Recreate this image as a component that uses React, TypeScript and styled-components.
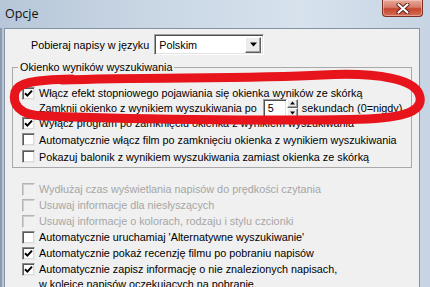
import React from 'react'
import styled, { createGlobalStyle } from 'styled-components'

const GlobalStyle = createGlobalStyle`
  html, body {
    margin: 0;
    padding: 0;
  }
  body {
    width: 430px;
    height: 287px;
    overflow: hidden;
    background: #c9d7e6;
  }
`

export const Window = styled.div`
  position: relative;
  width: 430px;
  height: 287px;
  overflow: hidden;
  display: flex;
  flex-direction: column;
  background: linear-gradient(to right, #b7c7d9 0%, #c9d6e4 35%, #d7e2ed 70%, #c6d4e3 100%);
  font-family: 'Liberation Sans', Arial, sans-serif;
  font-size: 10.8px;
  color: #000;
`

export const TitleBar = styled.div`
  height: 28px;
  flex: none;
  display: flex;
  align-items: flex-start;
  justify-content: space-between;
`

export const Title = styled.span`
  font-family: 'Open Sans', 'Noto Sans', sans-serif;
  font-size: 12.5px;
  line-height: 18px;
  margin: 5px 0 0 5px;
  color: #111;
`

export const CloseButton = styled.div`
  width: 41px;
  height: 17px;
  margin-right: 7px;
  box-sizing: border-box;
  border: 1px solid #7a2e24;
  border-top: none;
  border-radius: 0 0 4px 4px;
  background: linear-gradient(#e7a99b 0%, #d77b68 45%, #c4452f 55%, #d56d52 100%);
  box-shadow: inset 0 0 0 1px rgba(255, 220, 210, 0.45);
  display: flex;
  align-items: center;
  justify-content: center;
`

export const Frame = styled.div`
  flex: 1;
  min-height: 0;
  display: flex;
  padding: 0 10px 0 4px;
  box-shadow: inset 2px 0 0 #8c9aab;
`

export const Client = styled.div`
  flex: 1;
  background: #f0f0f0;
  border: 1px solid #8593a5;
  border-bottom: none;
  display: flex;
  flex-direction: column;
  padding: 5px 0 0 0;
`

export const LangRow = styled.div`
  display: flex;
  align-items: center;
  gap: 5px;
  padding-left: 26px;
  height: 21px;
`

/* classic 3D sunken edit/combo frame */
export const Sunken = styled.div<{ $w: number; $h: number }>`
  width: ${(p) => p.$w}px;
  height: ${(p) => p.$h}px;
  box-sizing: border-box;
  background: #fff;
  border: 1px solid;
  border-color: #a0a0a0 #ffffff #ffffff #a0a0a0;
  box-shadow: inset 1px 1px 0 #505050, inset -1px -1px 0 #e3e3e3;
  display: flex;
  align-items: center;
  padding: 0 2px 0 4px;
`

export const FieldText = styled.span`
  flex: 1;
  line-height: 14px;
`

export const Raised = styled.div<{ $w: number; $h: number }>`
  width: ${(p) => p.$w}px;
  height: ${(p) => p.$h}px;
  box-sizing: border-box;
  background: #ececec;
  border: 1px solid;
  border-color: #ffffff #606060 #606060 #ffffff;
  box-shadow: inset -1px -1px 0 #a0a0a0;
  display: flex;
  align-items: center;
  justify-content: center;
`

export const Group = styled.fieldset`
  margin: 6px 7px 0 7px;
  padding: 11px 0 2px 9px;
  border: 1px solid #a9a9a9;
  min-width: 0;
`

export const Legend = styled.legend`
  padding: 0 2px;
  margin-left: -4px;
  line-height: 13px;
`

export const Rows = styled.div`
  display: flex;
  flex-direction: column;
`

export const Row = styled.div<{ $h: number }>`
  flex: none;
  display: flex;
  align-items: center;
  height: ${(p) => p.$h}px;
  white-space: nowrap;
`

export const Label = styled.span<{ $disabled?: boolean }>`
  margin-left: 4px;
  line-height: 14px;
  color: ${(p) => (p.$disabled ? '#a6a6a6' : '#000')};
`

export const PlainLabel = styled.span`
  margin-left: 17px;
  line-height: 14px;
`

export const Box = styled.span<{ $disabled?: boolean }>`
  flex: none;
  width: 13px;
  height: 13px;
  box-sizing: border-box;
  border: 1px solid;
  border-color: ${(p) =>
    p.$disabled ? '#b5b5b5 #f4f4f4 #f4f4f4 #b5b5b5' : '#8a8a8a #e8e8e8 #e8e8e8 #8a8a8a'};
  background: ${(p) => (p.$disabled ? '#f0f0f0' : '#fff')};
  box-shadow: ${(p) =>
    p.$disabled ? 'inset 1px 1px 0 #cfcfcf' : 'inset 1px 1px 0 #5a5a5a, inset -1px -1px 0 #dcdcdc'};
  display: inline-flex;
  align-items: center;
  justify-content: center;
`

export const Lower = styled.div`
  display: flex;
  flex-direction: column;
  padding-left: 17px;
  margin-top: 13px;
`

export const MultiRow = styled.div`
  display: flex;
  align-items: flex-start;
  padding-top: 2px;
`

export const MultiLabel = styled.span`
  margin-left: 4px;
  line-height: 15px;
  margin-top: -1px;
  white-space: nowrap;
`

export const SpinWrap = styled.div`
  display: flex;
  align-items: center;
  margin: 0 4px 0 6px;
`

export const SpinButtons = styled.div`
  display: flex;
  flex-direction: column;
`

export const Overlay = styled.svg`
  position: absolute;
  left: 0;
  top: 0;
  pointer-events: none;
`

const Check = () => (
  <svg width="9" height="9" viewBox="0 0 9 9">
    <path d="M1 4.2 L3.4 6.6 L8 1.6" stroke="#000" strokeWidth="2" fill="none" />
  </svg>
)

interface CheckItemProps {
  checked?: boolean
  disabled?: boolean
  h?: number
  children: React.ReactNode
}

const CheckItem: React.FC<CheckItemProps> = ({ checked, disabled, h = 16, children }) => (
  <Row $h={h}>
    <Box $disabled={disabled}>{checked && <Check />}</Box>
    <Label $disabled={disabled}>{children}</Label>
  </Row>
)

const Arrow = ({ up, size = 7 }: { up?: boolean; size?: number }) => (
  <svg width={size} height={Math.ceil(size / 2) + 1} viewBox="0 0 7 4">
    <path d={up ? 'M0 4 L3.5 0 L7 4 Z' : 'M0 0 L7 0 L3.5 4 Z'} fill="#000" />
  </svg>
)

export default function App() {
  return (
    <Window>
      <GlobalStyle />
      <TitleBar>
        <Title>Opcje</Title>
        <CloseButton>
          <svg width="14" height="11" viewBox="0 0 14 11">
            <path
              d="M2.5 1.5 L11.5 9.5 M11.5 1.5 L2.5 9.5"
              stroke="#5a1a12"
              strokeWidth="4"
              strokeLinecap="round"
            />
            <path
              d="M2.5 1.5 L11.5 9.5 M11.5 1.5 L2.5 9.5"
              stroke="#fff"
              strokeWidth="2.2"
              strokeLinecap="round"
            />
          </svg>
        </CloseButton>
      </TitleBar>
      <Frame>
        <Client>
          <LangRow>
            <span>Pobieraj napisy w języku</span>
            <Sunken $w={110} $h={21}>
              <FieldText>Polskim</FieldText>
              <Raised $w={16} $h={16}>
                <Arrow />
              </Raised>
            </Sunken>
          </LangRow>

          <Group>
            <Legend>Okienko wyników wyszukiwania</Legend>
            <Rows>
              <CheckItem checked h={16}>
                Włącz efekt stopniowego pojawiania się okienka wyników ze skórką
              </CheckItem>
              <Row $h={14}>
                <PlainLabel>Zamknij okienko z wynikiem wyszukiwania po</PlainLabel>
                <SpinWrap>
                  <Sunken $w={24} $h={19}>
                    <FieldText>5</FieldText>
                  </Sunken>
                  <SpinButtons>
                    <Raised $w={11} $h={9.5}>
                      <Arrow up size={5} />
                    </Raised>
                    <Raised $w={11} $h={9.5}>
                      <Arrow size={5} />
                    </Raised>
                  </SpinButtons>
                </SpinWrap>
                <span>sekundach (0=nigdy)</span>
              </Row>
              <CheckItem checked h={16}>
                Wyłącz program po zamknięciu okienka z wynikiem wyszukiwania
              </CheckItem>
              <CheckItem h={17}>
                Automatycznie włącz film po zamknięciu okienka z wynikiem wyszukiwania
              </CheckItem>
              <CheckItem h={17}>
                Pokazuj balonik z wynikiem wyszukiwania zamiast okienka ze skórką
              </CheckItem>
            </Rows>
          </Group>

          <Lower>
            <CheckItem disabled>Wydłużaj czas wyświetlania napisów do prędkości czytania</CheckItem>
            <CheckItem disabled>Usuwaj informacje dla niesłyszących</CheckItem>
            <CheckItem disabled>Usuwaj informacje o kolorach, rodzaju i stylu czcionki</CheckItem>
            <CheckItem>Automatycznie uruchamiaj 'Alternatywne wyszukiwanie'</CheckItem>
            <CheckItem checked>Automatycznie pokaż recenzję filmu po pobraniu napisów</CheckItem>
            <MultiRow>
              <Box>
                <Check />
              </Box>
              <MultiLabel>
                Automatycznie zapisz informację o nie znalezionych napisach,
                <br />w kolejce napisów oczekujących na pobranie.
              </MultiLabel>
            </MultiRow>
          </Lower>
        </Client>
      </Frame>

      <Overlay width="430" height="287" viewBox="0 0 430 287">
        <path
          d="M62 80 C150 77 250 79 322 75 C378 72 417 79 420 97 C423 113 399 119 350 119.5
             C262 121 120 119 42 116 C19 115 12 104 15 92 C18 83 32 80 72 79"
          stroke="#e8141c"
          strokeWidth="9"
          strokeLinecap="round"
          strokeLinejoin="round"
          fill="none"
        />
      </Overlay>
    </Window>
  )
}
